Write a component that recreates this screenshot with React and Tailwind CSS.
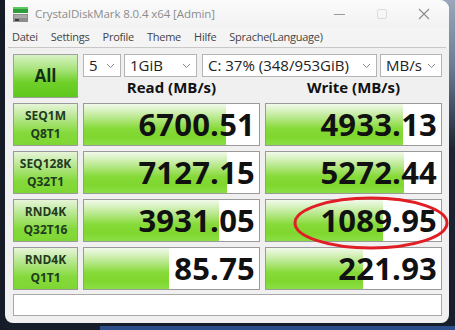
import React from "react";

const font = { fontFamily: '"Open Sans", "Noto Sans", "Liberation Sans", sans-serif' };

function Chevron() {
  return (
    <svg width="9" height="6" viewBox="0 0 9 6" className="shrink-0">
      <path d="M1 1 L4.5 4.5 L8 1" fill="none" stroke="#8a8a8a" strokeWidth="1" />
    </svg>
  );
}

function Select({ w, text }) {
  return (
    <div
      className={`${w} h-[23px] bg-white border border-[#b4b4b4] flex items-center justify-between pl-[5px] pr-[5px] text-[15px] text-[#222] leading-none`}
    >
      <span>{text}</span>
      <Chevron />
    </div>
  );
}

function Label({ a, b }) {
  return (
    <div className="h-full border border-[#9a9a9a] bg-[linear-gradient(to_bottom,#e6f5d8_0%,#b4e68a_35%,#86da3c_70%,#7ed632_100%)] flex flex-col items-center justify-center text-[12px] font-bold text-[#1f3b1f] leading-[18px]">
      <span>{a}</span>
      <span>{b}</span>
    </div>
  );
}

function Value({ v, pct }) {
  return (
    <div className="h-full border border-[#9a9a9a] bg-white relative overflow-hidden flex items-center justify-end pr-[4px]">
      <div
        className="absolute left-0 top-0 bottom-0 bg-[linear-gradient(to_bottom,#f2faeb_0%,#c2eb9c_28%,#86da38_60%,#7fd72e_80%,#8ade44_100%)]"
        style={{ width: `${pct}%` }}
      />
      <span className="relative text-[31px] font-bold text-[#111] tracking-[0.2px] leading-none">{v}</span>
    </div>
  );
}

const rows = [
  ["SEQ1M", "Q8T1", "6700.51", 81, "4933.13", 78],
  ["SEQ128K", "Q32T1", "7127.15", 81.5, "5272.44", 79],
  ["RND4K", "Q32T16", "3931.05", 77, "1089.95", 67],
  ["RND4K", "Q1T1", "85.75", 48.5, "221.93", 55.5],
];

export default function App() {
  return (
    <div
      className="w-[455px] h-[330px] overflow-hidden relative flex bg-[linear-gradient(to_bottom,#9aa7ba_0%,#6d7c93_20%,#1c2434_45%,#161d2b_100%)]"
      style={font}
    >
      <div className="w-[5px] h-full bg-[#151b27] shrink-0" />
      <div className="w-[444px] h-[323px] bg-[#f0f0f0] rounded-tr-[9px] rounded-b-[8px] flex flex-col shrink-0 overflow-hidden relative z-10">
        {/* Title bar */}
        <div className="h-[28px] flex items-center bg-[linear-gradient(to_bottom,#fbfbfb,#f2f2f2)]">
          <svg width="17" height="17" viewBox="0 0 17 17" className="ml-[7px] mt-[1px]">
            <rect x="1" y="1" width="15" height="6" fill="#2f9e3a" />
            <rect x="1" y="1" width="15" height="2" fill="#5cc860" />
            <rect x="1" y="8" width="15" height="8" fill="#8c8c8c" />
            <rect x="2" y="9" width="13" height="3" fill="#a8a8a8" />
            <rect x="3" y="13" width="4" height="2" fill="#3c3c3c" />
          </svg>
          <span className="ml-[6px] text-[11.5px] tracking-[-0.1px] text-[#8c8c8c]">CrystalDiskMark 8.0.4 x64 [Admin]</span>
          <div className="ml-auto flex items-center pr-[4px]">
            <div className="w-[44px] flex justify-center">
              <div className="w-[11px] h-[1px] bg-[#9a9a9a]" />
            </div>
            <div className="w-[42px] flex justify-center">
              <div className="w-[10px] h-[10px] border border-[#dcdcdc] rounded-[2px]" />
            </div>
            <div className="w-[42px] flex justify-center">
              <svg width="12" height="12" viewBox="0 0 12 12">
                <path d="M1 1 L11 11 M11 1 L1 11" stroke="#8a8a8a" strokeWidth="1.1" />
              </svg>
            </div>
          </div>
        </div>
        {/* Menu */}
        <div className="h-[19px] flex items-center gap-[13px] pl-[7px] text-[11px] tracking-[-0.25px] text-[#444] bg-[#f4f4f4]">
          <span>Datei</span>
          <span>Settings</span>
          <span>Profile</span>
          <span>Theme</span>
          <span>Hilfe</span>
          <span>Sprache(Language)</span>
        </div>
        <div className="h-[1px] bg-[#c8c8c8] mx-[3px]" />
        {/* Content */}
        <div className="pl-[8px] pt-[6px] flex flex-col">
          <div className="flex gap-x-[5px] h-[44px]">
            <div className="w-[65px] h-[44px] border border-[#a0a0a0] bg-[linear-gradient(to_bottom,#d8f3c4_0%,#a6e378_35%,#6fd02a_65%,#5fc81c_100%)] flex items-center justify-center text-[17px] font-bold text-[#123012]">
              All
            </div>
            <div className="flex flex-col">
              <div className="flex h-[23px]">
                <Select w="w-[38px]" text="5" />
                <div className="w-[3px]" />
                <Select w="w-[73px]" text="1GiB" />
                <div className="w-[5px]" />
                <Select w="w-[175px]" text="C: 37% (348/953GiB)" />
                <div className="w-[3px]" />
                <Select w="w-[62px]" text="MB/s" />
              </div>
              <div className="flex h-[21px] items-center">
                <div className="w-[177px] text-center text-[15px] font-bold text-[#111] leading-none">Read (MB/s)</div>
                <div className="w-[5px]" />
                <div className="w-[177px] text-center text-[15px] font-bold text-[#111] leading-none">Write (MB/s)</div>
              </div>
            </div>
          </div>
          <div className="flex flex-col gap-y-[5px] mt-[5px]">
            {rows.map((r, i) => (
              <div key={i} className="grid grid-cols-[65px_177px_177px] gap-x-[5px] h-[43px]">
                <Label a={r[0]} b={r[1]} />
                <Value v={r[2]} pct={r[3]} />
                <Value v={r[4]} pct={r[5]} />
              </div>
            ))}
          </div>
          <div className="mt-[4px] w-[429px] h-[22px] bg-white border border-[#a8a8a8]" />
        </div>
      </div>
      <div className="absolute left-[100px] right-0 bottom-0 h-[4px] bg-[#2c4f8c]" />
      <svg
        className="absolute left-[292px] top-[196px] z-20"
        width="158"
        height="54"
        viewBox="0 0 158 54"
      >
        <ellipse cx="79" cy="27" rx="76" ry="25" fill="none" stroke="#e01e26" strokeWidth="3" />
      </svg>
    </div>
  );
}
